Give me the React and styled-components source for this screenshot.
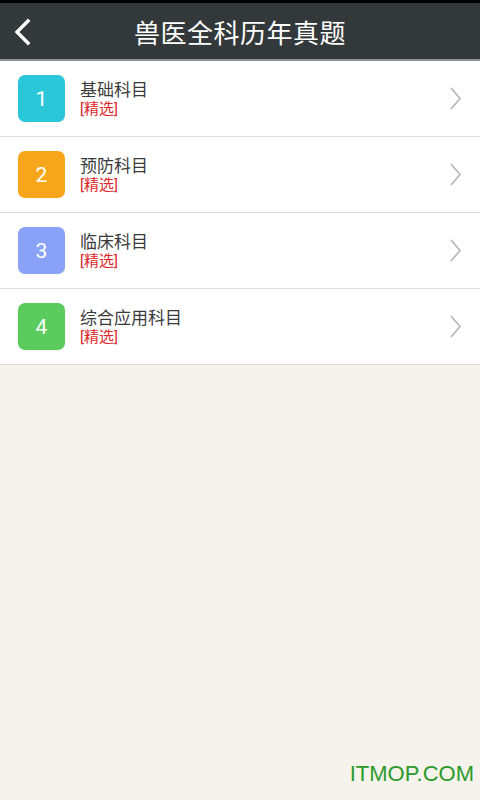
import styled, { createGlobalStyle } from "styled-components";

const GlobalStyle = createGlobalStyle`
  html, body {
    margin: 0;
    padding: 0;
    background: #f5f3ec;
  }
  body {
    font-family: Roboto, "Noto Sans CJK SC", sans-serif;
  }
`;

const subjects = [
  { no: 1, name: "基础科目", color: "#2ac6d9" },
  { no: 2, name: "预防科目", color: "#f7a61b" },
  { no: 3, name: "临床科目", color: "#89a2f8" },
  { no: 4, name: "综合应用科目", color: "#5bcb5d" },
];

const App = () => {
  return (
    <Page>
      <GlobalStyle />
      <StatusBar />
      <Header>
        <BackBtn>
          <svg width="20" height="28" viewBox="0 0 20 28">
            <path d="M15 3 L4 14 L15 25" fill="none" stroke="#fff" strokeWidth="3.4" strokeLinecap="square" />
          </svg>
        </BackBtn>
        <Title>兽医全科历年真题</Title>
      </Header>
      <List>
        {subjects.map((s) => (
          <Row key={s.no}>
            <Badge color={s.color}>{s.no}</Badge>
            <Info>
              <Name>{s.name}</Name>
              <Tag>[精选]</Tag>
            </Info>
            <Arrow>
              <svg width="13" height="25" viewBox="0 0 13 25">
                <path d="M2 2 L11 12.5 L2 23" fill="none" stroke="#b4b4b4" strokeWidth="1.6" />
              </svg>
            </Arrow>
          </Row>
        ))}
      </List>
      <Watermark>ITMOP.COM</Watermark>
    </Page>
  );
};

export default App;

const Page = styled.div`
  width: 480px;
  height: 800px;
  display: flex;
  flex-direction: column;
  background: #f5f3ec;
`;
const StatusBar = styled.div`
  height: 3px;
  background: #000;
`;
const Header = styled.header`
  height: 56px;
  background: #33383a;
  border-bottom: 2px solid #8e9494;
  display: flex;
  align-items: center;
  justify-content: center;
  position: relative;
`;
const BackBtn = styled.div`
  position: absolute;
  left: 13px;
  top: 15px;
  display: flex;
`;
const Title = styled.h1`
  margin: 0;
  color: #fff;
  font-size: 26px;
  font-weight: normal;
  letter-spacing: 0.5px;
  font-family: "Noto Sans CJK SC", sans-serif;
`;
const List = styled.div`
  background: #fff;
  display: flex;
  flex-direction: column;
`;
const Row = styled.div`
  height: 75px;
  border-bottom: 1px solid #dcdcdc;
  display: flex;
  align-items: center;
  padding: 0 18px;
`;
const Badge = styled.div`
  width: 47px;
  height: 47px;
  border-radius: 7px;
  background: ${(p) => p.color};
  color: #fff;
  font-size: 21px;
  font-family: Roboto, sans-serif;
  display: flex;
  align-items: center;
  justify-content: center;
  flex-shrink: 0;
`;
const Info = styled.div`
  flex: 1;
  margin-left: 15px;
  padding-top: 1px;
  display: flex;
  flex-direction: column;
  font-family: Roboto, "Noto Sans CJK SC", sans-serif;
`;
const Name = styled.div`
  color: #3a3a3a;
  font-size: 17px;
  line-height: 20px;
`;
const Tag = styled.div`
  color: #e0282a;
  font-size: 15px;
  line-height: 18px;
`;
const Arrow = styled.div`
  display: flex;
  margin-right: 0;
`;
const Watermark = styled.div`
  margin-top: auto;
  align-self: flex-end;
  margin-right: 6px;
  margin-bottom: 13px;
  color: #2c9a2a;
  font-family: "Liberation Sans", Arial, sans-serif;
  font-size: 22px;
`;
